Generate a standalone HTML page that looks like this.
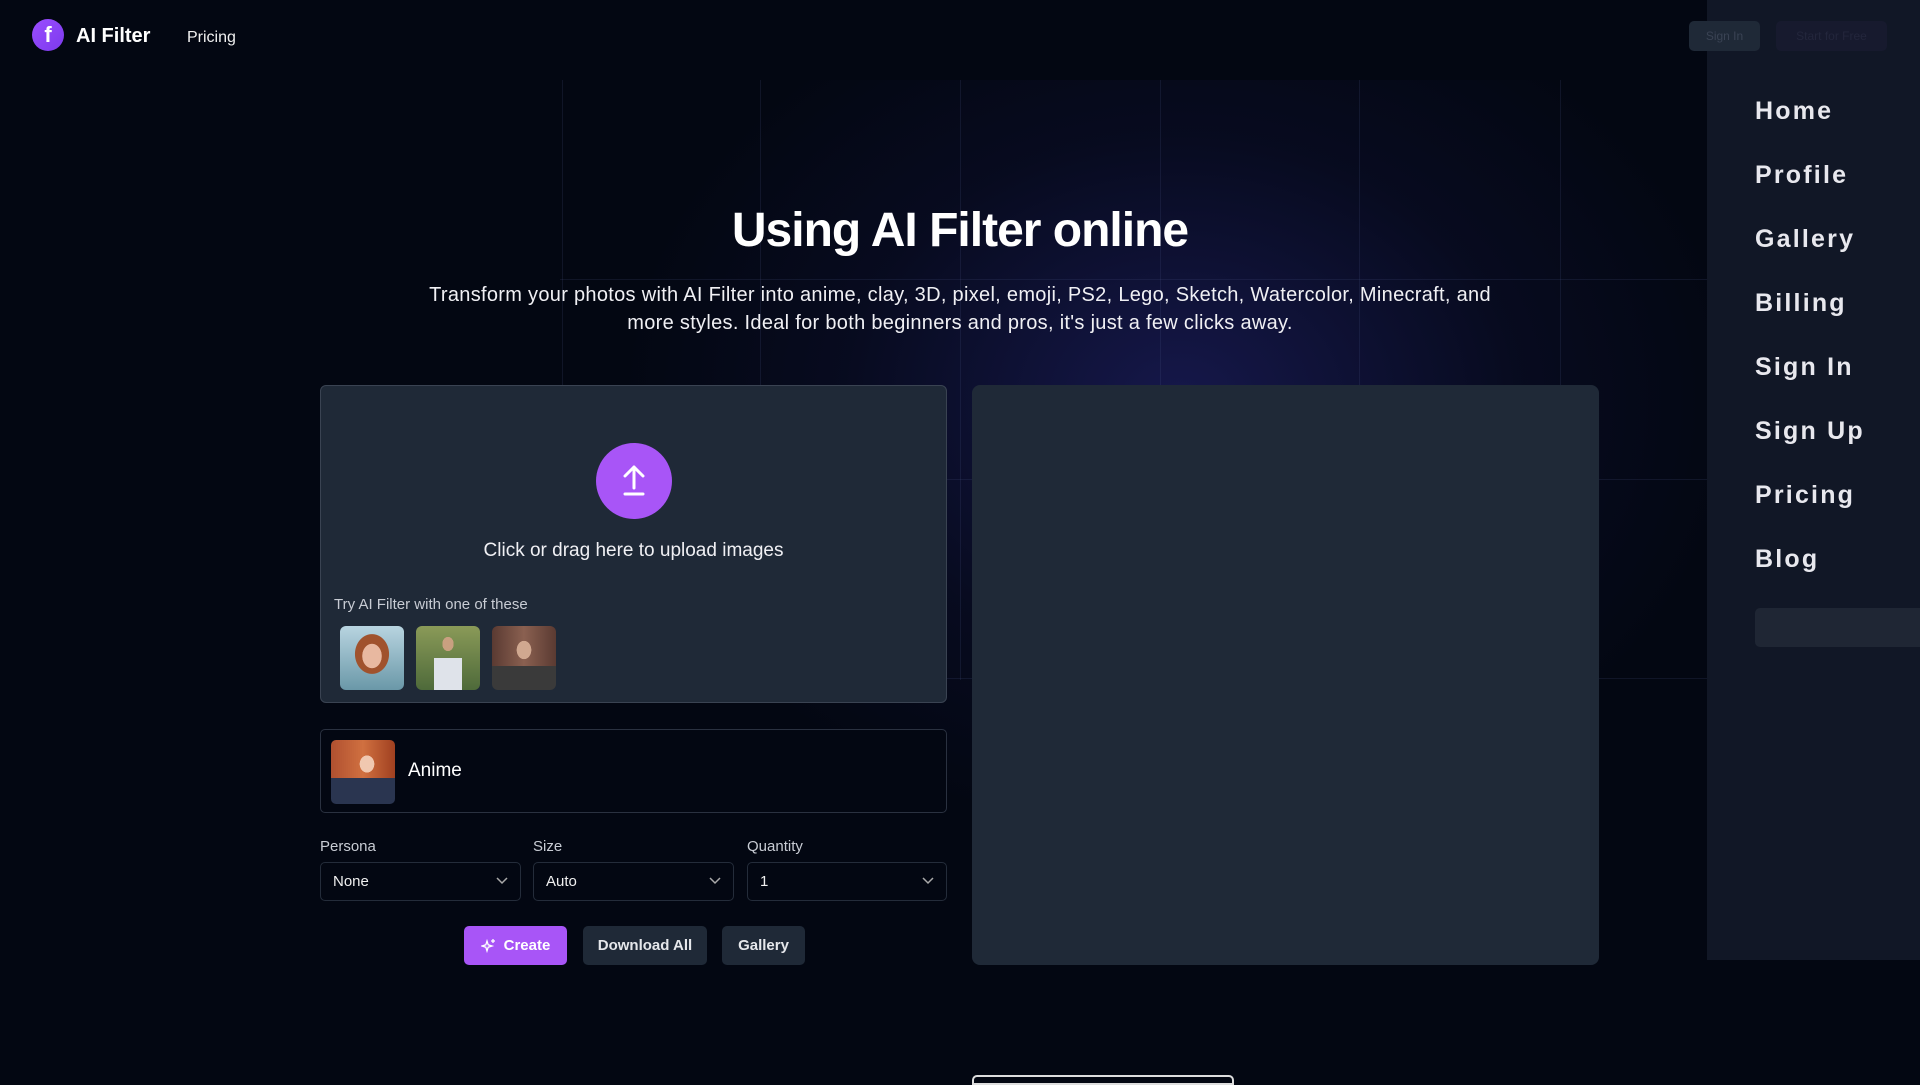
<!DOCTYPE html>
<html><head><meta charset="utf-8"><style>
*{margin:0;padding:0;box-sizing:border-box}
body{width:1920px;height:1080px;overflow:hidden;background:#030712;font-family:"Liberation Sans",sans-serif;color:#fff;position:relative}
.bg{position:absolute;left:0;top:80px;width:1707px;height:1000px;background:radial-gradient(ellipse 560px 440px at 1180px 320px,rgba(40,40,130,.5),rgba(20,22,70,.25) 60%,rgba(3,7,18,0) 100%)}
.vl{position:absolute;top:80px;height:600px;width:1px;background:rgba(80,90,140,.18)}
.hl{position:absolute;left:560px;width:1150px;height:1px;background:rgba(80,90,140,.18)}
.abs{position:absolute}
.side{position:absolute;left:1707px;top:0;width:213px;height:960px;background:#111726}
.side div{position:absolute;left:48px;font-size:25px;font-weight:bold;letter-spacing:2.2px;color:#e8e8ee}
.panel{background:#1f2937;border-radius:6px}
.sel{position:absolute;top:862px;height:39px;border:1px solid #242c3a;border-radius:5px;background:#030712;font-size:15px;padding:10px 12px;color:#f0f0f0}
.sel svg{position:absolute;right:12px;top:14px}
.lab{position:absolute;top:838px;font-size:15px;color:#c8ccd4}
.btn{position:absolute;top:926px;height:39px;border-radius:5px;font-size:15px;font-weight:bold;display:flex;align-items:center;justify-content:center;background:#1f2937;color:#e5e7eb}
.th{position:absolute;top:626px;width:64px;height:64px;border-radius:6px}
</style></head><body>
<div class="bg"></div>
<div class="vl" style="left:562px"></div><div class="vl" style="left:760px"></div><div class="vl" style="left:960px"></div><div class="vl" style="left:1160px"></div><div class="vl" style="left:1359px"></div><div class="vl" style="left:1560px"></div>
<div class="hl" style="top:279px"></div><div class="hl" style="top:479px"></div><div class="hl" style="top:678px"></div>

<div class="abs" style="left:32px;top:19px;width:32px;height:32px;border-radius:50%;background:linear-gradient(135deg,#9b4dff,#7c3aed);color:#fff;font-weight:bold;font-size:22px;text-align:center;line-height:32px">f</div>
<div class="abs" style="left:76px;top:25px;font-size:20px;font-weight:bold">AI Filter</div>
<div class="abs" style="left:187px;top:29px;font-size:16px;color:#f0f0f0">Pricing</div>

<div class="abs" style="left:0;width:1920px;top:203px;text-align:center;font-size:48px;font-weight:bold;letter-spacing:-1px">Using AI Filter online</div>
<div class="abs" style="left:405px;width:1110px;top:281px;text-align:center;font-size:20px;line-height:28px;color:#f0f0f4;letter-spacing:0.3px">Transform your photos with AI Filter into anime, clay, 3D, pixel, emoji, PS2, Lego, Sketch, Watercolor, Minecraft, and more styles. Ideal for both beginners and pros, it's just a few clicks away.</div>

<div class="abs panel" style="left:320px;top:385px;width:627px;height:318px;border:1.5px solid #3a4352"></div>
<div class="abs" style="left:596px;top:443px;width:76px;height:76px;border-radius:50%;background:#a855f7"></div>
<svg class="abs" style="left:614px;top:461px" width="40" height="40" viewBox="0 0 40 40" fill="none" stroke="#fff" stroke-width="3" stroke-linecap="round" stroke-linejoin="round"><path d="M20 27V6M11 15l9-9 9 9M11 33h18"/></svg>
<div class="abs" style="left:320px;width:627px;top:540px;text-align:center;font-size:19px;color:#f0f0f4">Click or drag here to upload images</div>
<div class="abs" style="left:334px;top:596px;font-size:15px;color:#c8ccd4">Try AI Filter with one of these</div>
<div class="th" style="left:340px;background:radial-gradient(ellipse 16px 20px at 32px 30px,#e8b8a0 60%,transparent 62%),radial-gradient(ellipse 24px 28px at 32px 28px,#a0522d 70%,transparent 72%),linear-gradient(#b8d4e0,#6a98a8)"></div>
<div class="th" style="left:416px;background:radial-gradient(ellipse 8px 10px at 32px 18px,#c9a080 70%,transparent 72%),linear-gradient(90deg,transparent 18px,#dfe3ea 18px,#dfe3ea 46px,transparent 46px) 0 32px/64px 32px no-repeat,linear-gradient(#8a9a58,#4e6a3a)"></div>
<div class="th" style="left:492px;background:radial-gradient(ellipse 12px 15px at 32px 24px,#d0a890 60%,transparent 62%),linear-gradient(transparent 40px,#3a3a3a 40px),linear-gradient(90deg,#5a3a32,#8a6050,#5a3a32)"></div>

<div class="abs" style="left:320px;top:729px;width:627px;height:84px;border:1px solid #2a3140;border-radius:5px;background:#030712"></div>
<div class="abs" style="left:331px;top:740px;width:64px;height:64px;border-radius:5px;background:radial-gradient(ellipse 12px 14px at 36px 24px,#f0c8b0 60%,transparent 62%),linear-gradient(transparent 38px,#2a3550 38px),linear-gradient(90deg,#b05030,#d07040,#a04020)"></div>
<div class="abs" style="left:408px;top:760px;font-size:19px">Anime</div>

<div class="lab" style="left:320px">Persona</div><div class="lab" style="left:533px">Size</div><div class="lab" style="left:747px">Quantity</div>
<div class="sel" style="left:320px;width:201px">None<svg width="12" height="8" viewBox="0 0 12 8"><path d="M1 1l5 5 5-5" stroke="#aaa" fill="none" stroke-width="1.5"/></svg></div>
<div class="sel" style="left:533px;width:201px">Auto<svg width="12" height="8" viewBox="0 0 12 8"><path d="M1 1l5 5 5-5" stroke="#aaa" fill="none" stroke-width="1.5"/></svg></div>
<div class="sel" style="left:747px;width:200px">1<svg width="12" height="8" viewBox="0 0 12 8"><path d="M1 1l5 5 5-5" stroke="#aaa" fill="none" stroke-width="1.5"/></svg></div>

<div class="btn" style="left:464px;width:103px;background:#a855f7;color:#fff"><svg width="16" height="16" viewBox="0 0 16 16" fill="none" stroke="#fff" stroke-width="1.3" style="margin-right:7px"><path d="M6 3l1.2 3.8L11 8l-3.8 1.2L6 13l-1.2-3.8L1 8l3.8-1.2zM12 1v4M10 3h4"/></svg>Create</div>
<div class="btn" style="left:583px;width:124px">Download All</div>
<div class="btn" style="left:722px;width:83px">Gallery</div>

<div class="abs panel" style="left:972px;top:385px;width:627px;height:580px;border-radius:8px"></div>
<div class="abs" style="left:972px;top:1075px;width:262px;height:10px;border:2px solid #ddd;border-radius:5px 5px 0 0"></div>

<div class="side">
<div style="top:97px">Home</div><div style="top:161px">Profile</div><div style="top:225px">Gallery</div><div style="top:289px">Billing</div><div style="top:353px">Sign In</div><div style="top:417px">Sign Up</div><div style="top:481px">Pricing</div><div style="top:545px">Blog</div>
<span style="position:absolute;left:48px;top:608px;width:165px;height:39px;background:#1f2634;border-radius:5px 0 0 5px"></span>
</div>
<div class="abs" style="left:1689px;top:21px;width:71px;height:30px;background:#1f2937;border-radius:5px;font-size:12px;color:#3a4354;text-align:center;line-height:30px">Sign In</div>
<div class="abs" style="left:1776px;top:21px;width:111px;height:30px;background:#171a2e;border-radius:5px;font-size:12px;color:#23263c;text-align:center;line-height:30px">Start for Free</div>
</body></html>
